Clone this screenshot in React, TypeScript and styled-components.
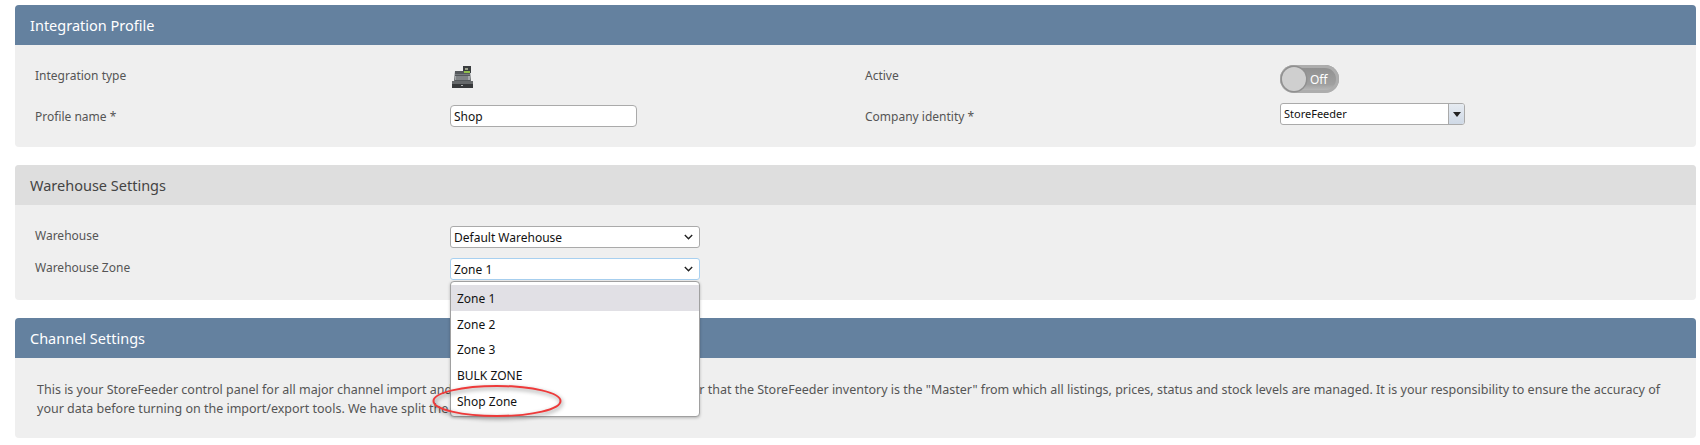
import React from "react";
import styled, { createGlobalStyle } from "styled-components";

const GlobalStyle = createGlobalStyle`
	html, body {
		margin: 0;
		padding: 0;
		background: #fff;
		overflow: hidden;
	}
	body {
		font-family: "Noto Sans", "Open Sans", sans-serif;
		font-size: 12px;
		color: #555;
	}
`;

const zones = ["Zone 1", "Zone 2", "Zone 3", "BULK ZONE", "Shop Zone"];

const chevron =
	"url(\"data:image/svg+xml,%3Csvg xmlns='http://www.w3.org/2000/svg' width='9' height='6'%3E%3Cpath d='M.8 1l3.7 3.7L8.2 1' fill='none' stroke='%23222' stroke-width='1.4'/%3E%3C/svg%3E\")";

/* cash register drawing for the integration type */
const RegisterIcon = () => (
	<svg width="22" height="22" viewBox="0 0 22 22">
		<rect x="12" y="0" width="8" height="7" fill="#3a3d3f" />
		<rect x="14" y="2" width="3" height="2" fill="#9aa08c" />
		<path d="M4 5h15l1 11H3z" fill="#55595c" />
		<rect x="13" y="5" width="6" height="2" fill="#8fbf4a" />
		<rect x="4" y="8" width="15" height="1" fill="#777b7e" />
		<path d="M4 10h15v4H4z" fill="#a3a7a9" />
		<path d="M6 10v4M8 10v4M10 10v4M12 10v4M14 10v4M16 10v4" stroke="#5c6062" strokeWidth="1" />
		<rect x="1" y="15" width="21" height="3" fill="#66696b" />
		<rect x="1" y="18" width="21" height="4" fill="#37393b" />
		<rect x="10" y="19" width="2" height="1" fill="#b0b3b5" />
	</svg>
);

const App = () => {
	return (
		<>
			<GlobalStyle />
			<Page>
				<Panel>
					<PanelHeader $tone="blue">Integration Profile</PanelHeader>
					<FourCols $pad="20px 0 20px">
						<Label $lift={9}>Integration type</Label>
						<Value $top>
							<IconSlot>
								<RegisterIcon />
							</IconSlot>
						</Value>
						<Label $lift={9}>Active</Label>
						<Value $top>
							<Toggle>
								<Knob />
								<ToggleText>Off</ToggleText>
							</Toggle>
						</Value>
						<Label>Profile name *</Label>
						<Value>
							<TextInput defaultValue="Shop" />
						</Value>
						<Label>Company identity *</Label>
						<Value>
							<ComboBox>
								<ComboText>StoreFeeder</ComboText>
								<ComboButton>
									<ComboArrow />
								</ComboButton>
							</ComboBox>
						</Value>
					</FourCols>
				</Panel>

				<Panel>
					<PanelHeader $tone="grey">Warehouse Settings</PanelHeader>
					<FourCols $pad="21px 0 20px">
						<Label $lift={3}>Warehouse</Label>
						<Value>
							<SelectBox>
								<option>Default Warehouse</option>
							</SelectBox>
						</Value>
						<Spacer />
						<Spacer />
						<Label $lift={3}>Warehouse Zone</Label>
						<Value>
							<SelectWrap>
								<SelectBox $focused>
									<option>Zone 1</option>
								</SelectBox>
								<DropList>
									{zones.map((zone, i) => (
										<DropItem key={zone} $active={i === 0}>
											{zone}
										</DropItem>
									))}
									<Highlight width="134" height="36" viewBox="0 0 134 36">
										<ellipse cx="65" cy="17" rx="63.5" ry="15" fill="none" stroke="#ee3a3a" strokeWidth="2" />
									</Highlight>
								</DropList>
							</SelectWrap>
						</Value>
						<Spacer />
						<Spacer />
					</FourCols>
				</Panel>

				<Panel>
					<PanelHeader $tone="blue">Channel Settings</PanelHeader>
					<Intro>
						This is your StoreFeeder control panel for all major channel import and export functions. Please always remember that the
						StoreFeeder inventory is the "Master" from which all listings, prices, status and stock levels are managed. It is your
						responsibility to ensure the accuracy of
						<br />
						your data before turning on the import/export tools. We have split the settings into sections.
					</Intro>
				</Panel>
			</Page>
		</>
	);
};

export default App;

// Styled Components
const Page = styled.div`
	display: flex;
	flex-direction: column;
	gap: 18px;
	width: 1681px;
	padding: 5px 0 0 15px;
`;

const Panel = styled.section`
	background: #efefef;
	border-radius: 4px;
`;

const PanelHeader = styled.h2<{ $tone: "blue" | "grey" }>`
	margin: 0;
	height: 40px;
	padding: 0 15px;
	display: flex;
	align-items: center;
	font-size: 14.5px;
	font-weight: 400;
	border-radius: 4px 4px 0 0;
	background: ${(p) => (p.$tone === "blue" ? "#64819f" : "#dedede")};
	color: ${(p) => (p.$tone === "blue" ? "#fff" : "#444")};
`;

const FourCols = styled.div<{ $pad: string }>`
	display: grid;
	grid-template-columns: 415px 415px 415px 415px;
	row-gap: 10px;
	padding: ${(p) => p.$pad};
	margin-left: 20px;
	align-items: center;
`;

const Label = styled.div<{ $lift?: number }>`
	font-size: 12px;
	color: #555;
	margin-bottom: ${(p) => p.$lift ?? 0}px;
`;

const Value = styled.div<{ $top?: boolean }>`
	display: flex;
	align-items: center;
	align-self: ${(p) => (p.$top ? "start" : "center")};
	min-height: ${(p) => (p.$top ? "30px" : "0")};
`;

const IconSlot = styled.div`
	display: flex;
	margin: 1px 0 0 1px;
	align-self: flex-start;
`;

const TextInput = styled.input`
	box-sizing: border-box;
	width: 187px;
	height: 22px;
	padding: 0 3px;
	border: 1px solid #aaa;
	border-radius: 4px;
	background: #fff;
	font: 12px "Noto Sans", sans-serif;
	color: #111;
	outline: none;
`;

const Toggle = styled.div`
	box-sizing: border-box;
	width: 59px;
	height: 28px;
	padding-left: 2px;
	align-self: flex-start;
	border-radius: 14px;
	display: flex;
	align-items: center;
	background: linear-gradient(#8e8e8e, #a0a0a0 70%, #c4c4c4);
	box-shadow: inset 0 0 0 3px #adadad;
`;

const Knob = styled.div`
	width: 24px;
	height: 24px;
	border-radius: 50%;
	flex: none;
	background: #cfcfcf;
	box-shadow: 0 0 0 1.5px #909090;
`;

const ToggleText = styled.span`
	margin-left: 4px;
	font-size: 12px;
	color: #fff;
`;

const ComboBox = styled.div`
	box-sizing: border-box;
	width: 185px;
	height: 22px;
	margin: -2px 0 2px;
	display: flex;
	border: 1px solid #aaa;
	border-radius: 3px;
	background: #fff;
	overflow: hidden;
`;

const ComboText = styled.span`
	flex: 1;
	padding-left: 3px;
	line-height: 20px;
	font-size: 11px;
	color: #111;
`;

const ComboButton = styled.span`
	width: 15px;
	display: flex;
	align-items: center;
	justify-content: center;
	border-left: 1px solid #aaa;
	background: linear-gradient(#e6ebf1, #cfd9e6);
`;

const ComboArrow = styled.i`
	width: 0;
	height: 0;
	border-left: 4px solid transparent;
	border-right: 4px solid transparent;
	border-top: 5px solid #222;
`;

const SelectWrap = styled.div`
	position: relative;
`;

const Spacer = styled.div``;

const SelectBox = styled.select<{ $focused?: boolean }>`
	display: block;
	box-sizing: border-box;
	width: 250px;
	height: 22px;
	padding: 0 0 0 3px;
	appearance: none;
	border: 1px solid ${(p) => (p.$focused ? "#a8d0f0" : "#aaa")};
	border-radius: 3px;
	background: #fff ${chevron} no-repeat right 6px center;
	font: 12px "Noto Sans", sans-serif;
	color: #111;
	outline: none;
`;

const DropList = styled.div`
	position: absolute;
	top: 23px;
	left: 0;
	box-sizing: border-box;
	width: 250px;
	height: 136px;
	padding-top: 3px;
	background: #fff;
	border: 1px solid #a0a0a0;
	border-radius: 4px;
	box-shadow: 0 1px 3px rgba(0, 0, 0, 0.25);
`;

const DropItem = styled.div<{ $active?: boolean }>`
	box-sizing: border-box;
	height: 25.7px;
	padding-left: 6px;
	line-height: 27px;
	font-size: 12px;
	color: #111;
	background: ${(p) => (p.$active ? "#e1e0e5" : "transparent")};
`;

const Highlight = styled.svg`
	position: absolute;
	left: -19px;
	top: 102px;
	overflow: visible;
	filter: drop-shadow(1px 2px 2px rgba(0, 0, 0, 0.45));
`;

const Intro = styled.p`
	margin: 0;
	padding: 22px 20px 20px 22px;
	font-size: 12.5px;
	line-height: 19px;
	color: #555;
	white-space: nowrap;
`;
